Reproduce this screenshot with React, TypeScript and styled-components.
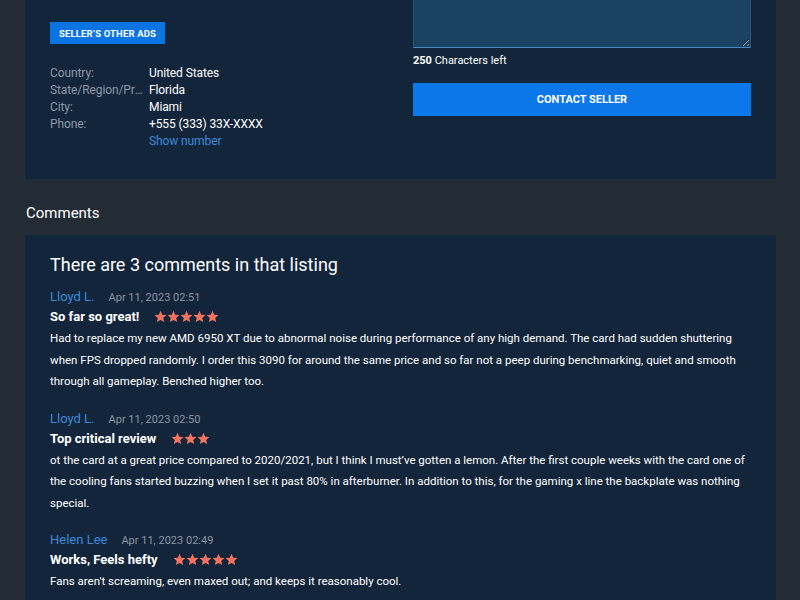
import React from "react";
import styled, { createGlobalStyle } from "styled-components";

const Global = createGlobalStyle`
  html, body { margin: 0; padding: 0; background: #232b35; }
  body { font-family: Roboto, "Liberation Sans", Arial, sans-serif; color: #ffffff; }
  * { box-sizing: border-box; }
`;

const Page = styled.div`
  width: 800px;
  height: 600px;
  overflow: hidden;
  padding: 0 24px 0 25px;
`;

const Panel = styled.section`
  background: #13253b;
  padding: 0 25px;
`;

const TopPanel = styled(Panel)`
  display: grid;
  grid-template-columns: 1fr 1fr;
  column-gap: 25px;
  height: 179px;
`;

const LeftCol = styled.div`
  padding-top: 22px;
  display: flex;
  flex-direction: column;
  align-items: flex-start;
`;

const SmallButton = styled.button`
  background: #0b74e3;
  color: #fff;
  border: none;
  height: 22px;
  padding: 0 9px;
  font-family: inherit;
  font-size: 9.5px;
  font-weight: 700;
  letter-spacing: 0.15px;
  text-transform: uppercase;
  cursor: pointer;
`;

const InfoGrid = styled.dl`
  margin: 21px 0 0;
  display: grid;
  grid-template-columns: 93px 1fr;
  column-gap: 6px;
  font-size: 12px;
  line-height: 17px;
  letter-spacing: -0.1px;
`;

const Label = styled.dt`
  color: #8d98a7;
  white-space: nowrap;
  overflow: hidden;
  text-overflow: ellipsis;
`;

const Value = styled.dd`
  margin: 0;
  color: #ffffff;
`;

const Link = styled.a`
  color: #3b8ad8;
  text-decoration: none;
  cursor: pointer;
`;

const RightCol = styled.div`
  display: flex;
  flex-direction: column;
`;

const Message = styled.textarea`
  display: block;
  width: 100%;
  height: 48px;
  margin: 0;
  background: #1c4262;
  border: 1px solid #27557f;
  border-top: none;
  border-bottom: 1px solid #4b87c2;
  outline: none;
  resize: vertical;
  color: #fff;
`;

const Counter = styled.div`
  margin-top: 6px;
  font-size: 11px;
  line-height: 14px;
  color: #ffffff;
  b { font-weight: 700; }
`;

const WideButton = styled.button`
  margin-top: 15px;
  height: 33px;
  width: 100%;
  background: #0b77e8;
  color: #fff;
  border: none;
  font-family: inherit;
  font-size: 11px;
  font-weight: 700;
  text-transform: uppercase;
  cursor: pointer;
`;

const SectionTitle = styled.h2`
  margin: 25px 0 13px 1px;
  font-size: 15px;
  line-height: 18px;
  font-weight: 400;
  color: #ffffff;
`;

const CommentsPanel = styled(Panel)`
  padding-top: 18px;
  padding-bottom: 20px;
`;

const CommentsHeading = styled.h3`
  margin: 0 0 11px;
  font-size: 18px;
  line-height: 24px;
  font-weight: 400;
  color: #ffffff;
`;

const Comment = styled.article`
  margin-bottom: 17px;
`;

const Meta = styled.div`
  display: flex;
  align-items: baseline;
  gap: 14px;
  line-height: 18px;
`;

const Author = styled.span`
  font-size: 13px;
  color: #3b8ad8;
`;

const DateText = styled.span`
  font-size: 11px;
  color: #8a94a2;
`;

const TitleRow = styled.div`
  display: flex;
  align-items: center;
  gap: 15px;
  height: 19px;
`;

const Title = styled.strong`
  font-size: 13px;
  font-weight: 700;
  color: #ffffff;
`;

const Stars = styled.span`
  display: inline-flex;
  gap: 0;
`;

const Body = styled.p`
  margin: 2px 0 0;
  font-size: 11.5px;
  line-height: 21.5px;
  color: #ffffff;
`;

const Star = () => (
  <svg width="13" height="13" viewBox="0 0 24 24">
    <path
      d="M12 1.5l3.1 7.2 7.8.7-5.9 5.2 1.8 7.7L12 18.3 5.2 22.3 7 14.6 1.1 9.4l7.8-.7z"
      fill="#f3735f"
    />
  </svg>
);

const comments = [
  {
    author: "Lloyd L.",
    date: "Apr 11, 2023 02:51",
    title: "So far so great!",
    stars: 5,
    body:
      "Had to replace my new AMD 6950 XT due to abnormal noise during performance of any high demand. The card had sudden shuttering when FPS dropped randomly. I order this 3090 for around the same price and so far not a peep during benchmarking, quiet and smooth through all gameplay. Benched higher too.",
  },
  {
    author: "Lloyd L.",
    date: "Apr 11, 2023 02:50",
    title: "Top critical review",
    stars: 3,
    body:
      "ot the card at a great price compared to 2020/2021, but I think I must\u2019ve gotten a lemon. After the first couple weeks with the card one of the cooling fans started buzzing when I set it past 80% in afterburner. In addition to this, for the gaming x line the backplate was nothing special.",
  },
  {
    author: "Helen Lee",
    date: "Apr 11, 2023 02:49",
    title: "Works, Feels hefty",
    stars: 5,
    body:
      "Fans aren't screaming, even maxed out; and keeps it reasonably cool.\nThe 2 fans blow most of the heat air out the side, into the case rather than out the back.",
  },
];

export default function App() {
  return (
    <>
      <Global />
      <Page>
        <TopPanel>
          <LeftCol>
            <SmallButton>Seller’s other ads</SmallButton>
            <InfoGrid>
              <Label>Country:</Label>
              <Value>United States</Value>
              <Label>State/Region/Province:</Label>
              <Value>Florida</Value>
              <Label>City:</Label>
              <Value>Miami</Value>
              <Label>Phone:</Label>
              <Value>+555 (333) 33X-XXXX</Value>
              <span />
              <Value>
                <Link>Show number</Link>
              </Value>
            </InfoGrid>
          </LeftCol>
          <RightCol>
            <Message />
            <Counter>
              <b>250</b> Characters left
            </Counter>
            <WideButton>Contact seller</WideButton>
          </RightCol>
        </TopPanel>

        <SectionTitle>Comments</SectionTitle>

        <CommentsPanel>
          <CommentsHeading>There are 3 comments in that listing</CommentsHeading>
          {comments.map((c, i) => (
            <Comment key={i}>
              <Meta>
                <Author>{c.author}</Author>
                <DateText>{c.date}</DateText>
              </Meta>
              <TitleRow>
                <Title>{c.title}</Title>
                <Stars>
                  {Array.from({ length: c.stars }).map((_, j) => (
                    <Star key={j} />
                  ))}
                </Stars>
              </TitleRow>
              {c.body.split("\n").map((line, k) => (
                <Body key={k}>{line}</Body>
              ))}
            </Comment>
          ))}
        </CommentsPanel>
      </Page>
    </>
  );
}
